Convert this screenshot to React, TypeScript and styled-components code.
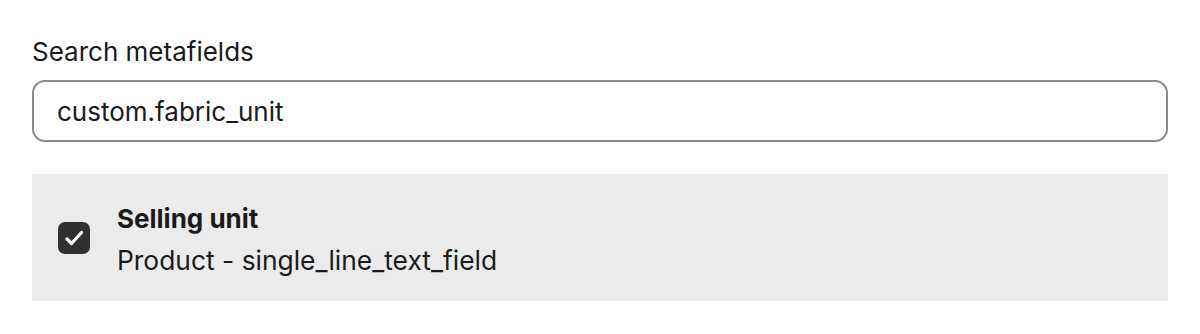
import React from 'react';
import styled, { createGlobalStyle } from 'styled-components';

const GlobalStyle = createGlobalStyle`
  body {
    margin: 0;
    background: #ffffff;
    font-family: Inter, "Noto Sans", sans-serif;
    color: #1a1a1a;
  }
`;

const Page = styled.div`
  padding: 36px 32px 0 32px;
  display: flex;
  flex-direction: column;
`;

const Label = styled.label`
  font-size: 26px;
  line-height: 32px;
  color: #1a1a1a;
  margin-bottom: 12px;
`;

const SearchInput = styled.input`
  box-sizing: border-box;
  height: 62px;
  width: 100%;
  border: 2px solid #8a8a8a;
  border-radius: 13px;
  background: #fdfdfd;
  padding: 0 23px;
  font-family: Inter, "Noto Sans", sans-serif;
  font-size: 26px;
  color: #1a1a1a;
  outline: none;
`;

const ResultRow = styled.div`
  margin-top: 32px;
  height: 127px;
  background: #ebebeb;
  display: flex;
  align-items: center;
  padding-left: 26px;
  gap: 27px;
`;

const CheckBox = styled.span`
  width: 32px;
  height: 32px;
  border-radius: 7px;
  background: #303030;
  display: flex;
  flex-shrink: 0;
`;

const RowText = styled.div`
  display: flex;
  flex-direction: column;
  padding-top: 2px;
`;

const Title = styled.div`
  font-size: 26px;
  font-weight: 700;
  line-height: 42px;
  color: #1a1a1a;
`;

const Subtitle = styled.div`
  font-size: 26.4px;
  line-height: 40px;
  color: #1a1a1a;
`;

export default function App() {
  return (
    <>
      <GlobalStyle />
      <Page>
        <Label>Search metafields</Label>
        <SearchInput defaultValue="custom.fabric_unit" />
        <ResultRow>
          <CheckBox>
            <svg width="32" height="32" viewBox="0 0 32 32" fill="none">
              <path d="M9 17l4.5 4.5L23.5 10.5" stroke="#ffffff" strokeWidth="3.2" strokeLinecap="round" strokeLinejoin="round" />
            </svg>
          </CheckBox>
          <RowText>
            <Title>Selling unit</Title>
            <Subtitle>Product - single_line_text_field</Subtitle>
          </RowText>
        </ResultRow>
      </Page>
    </>
  );
}
